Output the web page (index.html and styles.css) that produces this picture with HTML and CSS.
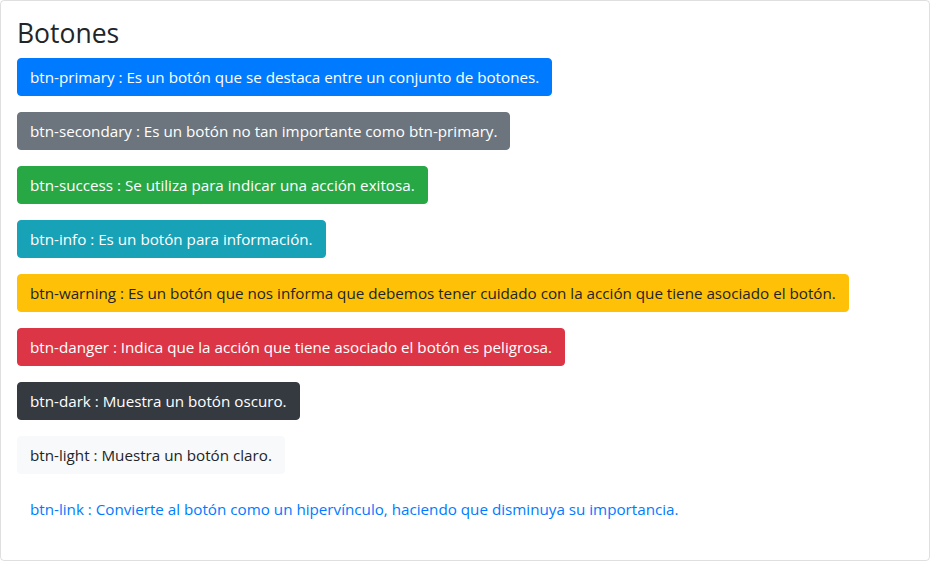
FILE: index.html
```html
<!DOCTYPE html>
<html lang="es">
<head>
<meta charset="utf-8">
<title>Botones</title>
<link rel="stylesheet" href="styles.css">
</head>
<body>
<div class="card">
  <div class="card-body">
    <h3 class="title">Botones</h3>
    <div class="btn-list">
      <div><button class="btn btn-primary">btn-primary : Es un botón que se destaca entre un conjunto de botones.</button></div>
      <div><button class="btn btn-secondary">btn-secondary : Es un botón no tan importante como btn-primary.</button></div>
      <div><button class="btn btn-success">btn-success : Se utiliza para indicar una acción exitosa.</button></div>
      <div><button class="btn btn-info">btn-info : Es un botón para información.</button></div>
      <div><button class="btn btn-warning">btn-warning : Es un botón que nos informa que debemos tener cuidado con la acción que tiene asociado el botón.</button></div>
      <div><button class="btn btn-danger">btn-danger : Indica que la acción que tiene asociado el botón es peligrosa.</button></div>
      <div><button class="btn btn-dark">btn-dark : Muestra un botón oscuro.</button></div>
      <div><button class="btn btn-light">btn-light : Muestra un botón claro.</button></div>
      <div><button class="btn btn-link">btn-link : Convierte al botón como un hipervínculo, haciendo que disminuya su importancia.</button></div>
    </div>
  </div>
</div>
</body>
</html>
```
FILE: styles.css
```css
html, body {
  margin: 0;
  padding: 0;
  background: #fff;
}
body {
  font-family: "Open Sans", "Noto Sans", sans-serif;
  color: #212529;
}
.card {
  width: 930px;
  height: 561px;
  box-sizing: border-box;
  border: 1px solid rgba(0, 0, 0, 0.125);
  border-radius: 4px;
}
.card-body {
  padding: 16px;
}
.title {
  margin: 0 0 8px;
  font-size: 26.5px;
  font-weight: 500;
  line-height: 33px;
  color: #212529;
}
.btn-list {
  display: flex;
  flex-direction: column;
  gap: 16px;
}
.btn {
  display: inline-block;
  font-family: inherit;
  font-size: 15.2px;
  line-height: 24px;
  padding: 6px 12px;
  border: 1px solid transparent;
  border-radius: 4px;
  color: #fff;
  background: transparent;
  text-align: center;
  cursor: pointer;
  margin: 0;
}
.btn-primary { background: #007bff; border-color: #007bff; }
.btn-secondary { background: #6c757d; border-color: #6c757d; }
.btn-success { background: #28a745; border-color: #28a745; }
.btn-info { background: #17a2b8; border-color: #17a2b8; }
.btn-warning { background: #ffc107; border-color: #ffc107; color: #212529; }
.btn-danger { background: #dc3545; border-color: #dc3545; }
.btn-dark { background: #343a40; border-color: #343a40; }
.btn-light { background: #f8f9fa; border-color: #f8f9fa; color: #212529; }
.btn-link { color: #007bff; background: transparent; }
```
